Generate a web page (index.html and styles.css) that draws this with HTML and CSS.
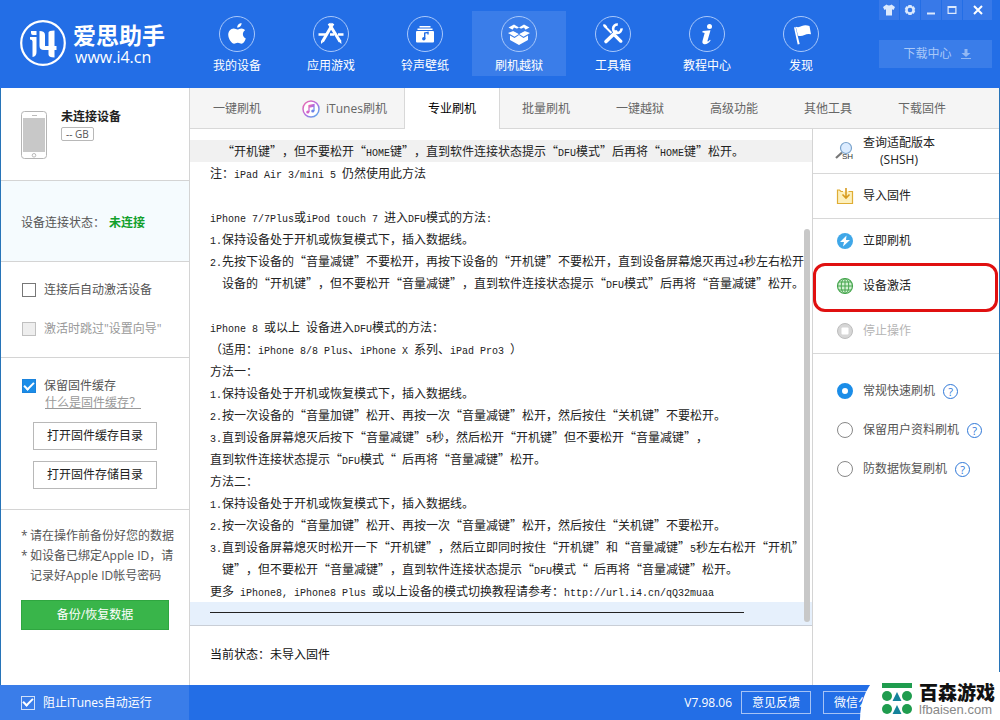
FILE: index.html
```html
<!DOCTYPE html>
<html lang="zh-CN">
<head>
<meta charset="utf-8">
<title>爱思助手</title>
<link rel="stylesheet" href="styles.css">
</head>
<body>
<div class="app">
  <header class="header">
    <div class="brand">
      <svg class="brand-logo" width="48" height="48" viewBox="0 0 48 48" aria-hidden="true">
        <circle cx="24" cy="24" r="21.8" fill="none" stroke="#fff" stroke-width="2.2"/>
        <path d="M12 12h5.500v4H14q-2 0-2-2zM11 18h6.500v15q0 4.500-4 5v-15.500q0-2-2.500-2zM20.500 12q5.500 0 5.500 4v11h3.500V13.500q0-2 6-2V27h2v4h-2v7.500q-6 0-6-3V31h-4.500q-4.500 0-4.500-4z" fill="#fff"/>
      </svg>
      <div class="brand-text">
        <strong class="brand-name">爱思助手</strong>
        <span class="brand-url">www.i4.cn</span>
      </div>
    </div>
    <nav class="nav">
      <a class="nav-item" href="#device">
        <svg class="nav-icon" viewBox="0 0 36 36"><circle class="ring" cx="18" cy="18" r="17.500"/><path d="M22.500 7c.3 2.500-1.700 4.700-4.200 4.700C18 9.400 20 7.200 22.500 7zM18.300 13.500c1.200 0 2.200-1.100 4.300-1.100 1.300 0 2.600.7 3.500 1.900-3.300 2-2.700 6.700.7 8.100-.9 2.600-2.600 5.300-4.300 5.300-1.400 0-1.900-.9-3.700-.9s-2.400.9-3.700.9c-2.300 0-5.500-4.600-5.800-8.200-.3-3.800 2.200-7 5.500-7 1.500 0 2.700 1 3.500 1z" fill="#fff"/></svg>
        <span>我的设备</span>
      </a>
      <a class="nav-item" href="#apps">
        <svg class="nav-icon" viewBox="0 0 36 36"><circle class="ring" cx="18" cy="18" r="17.500"/><path d="M16 7.500l11 18M20 7.500L9.500 25.500" stroke="#fff" stroke-width="3" fill="none"/><path d="M5.500 18.500h8M17 18.500h4M25 18.500h5.500" stroke="#fff" stroke-width="2.600"/><path d="M8 24.500l2.500 1.300L8 28zM25.500 25.500l2.600-1.400.4 3.900z" fill="#fff"/></svg>
        <span>应用游戏</span>
      </a>
      <a class="nav-item" href="#media">
        <svg class="nav-icon" viewBox="0 0 36 36"><circle class="ring" cx="18" cy="18" r="17.500"/><path d="M12.500 10.700h11M10.500 13.300h15" stroke="#fff" stroke-width="1.500"/><rect x="9" y="15" width="18" height="11.500" rx="1" fill="#fff"/><path d="M17.700 23v-6l3.300-.6v2" fill="none" stroke="#236ee6" stroke-width="1.400"/><circle cx="16.800" cy="22.800" r="1.700" fill="#236ee6"/></svg>
        <span>铃声壁纸</span>
      </a>
      <a class="nav-item nav-item-active" href="#flash">
        <svg class="nav-icon" viewBox="0 0 36 36"><circle class="ring" cx="18" cy="18" r="17.500"/><path d="M13 8.500l5 3-5 3-5.500-3zM23 8.500l5.500 3-5.500 3-5-3zM13 14.800l5 3.200-4.500 2.700-6.500-3.700zM23 14.800l6 2.200-6.500 3.700L18 18z" fill="#fff"/><path d="M13 11.500h0l5 2 5-2 2 3-7 3.500-7-3.500z" fill="#3a7de9"/><path d="M9 19.500l4.500 2.400L18 19l4.500 2.900 4.500-2.400V24l-9 5-9-5z" fill="#fff"/></svg>
        <span>刷机越狱</span>
      </a>
      <a class="nav-item" href="#tools">
        <svg class="nav-icon" viewBox="0 0 36 36"><circle class="ring" cx="18" cy="18" r="17.500"/><path d="M9.500 10l7 7" stroke="#fff" stroke-width="2" fill="none"/><path d="M8 8.500l2-.2 2.300 2.200-1.700 1.700-2.300-2zM18.500 20.300l2.300-2.300 6.500 6.500q.8 2.500-2.300 2.300z" fill="#fff"/><path d="M11 25.500l10-9.500" stroke="#fff" stroke-width="3.600" stroke-linecap="round"/><path d="M26.500 12.300a4.200 4.200 0 1 1-3.700-3.700" fill="none" stroke="#fff" stroke-width="2.600"/></svg>
        <span>工具箱</span>
      </a>
      <a class="nav-item" href="#tutorial">
        <svg class="nav-icon" viewBox="0 0 36 36"><circle class="ring" cx="18" cy="18" r="17.500"/><circle cx="20.500" cy="10.400" r="2.500" fill="#fff"/><path d="M13.500 15l8-.8-3 10.500q-.2 1 .6.700l2-1.600.5.700q-3.200 4.300-6.400 3.700-2.500-.4-1.600-3.700l2-7.300q.2-.8-2.100-.8z" fill="#fff"/></svg>
        <span>教程中心</span>
      </a>
      <a class="nav-item" href="#discover">
        <svg class="nav-icon" viewBox="0 0 36 36"><circle class="ring" cx="18" cy="18" r="17.500"/><path d="M11 11.500l1.500-.4L16.700 28l-2 .5zM12.800 10.800q3 1 6-.7 3.500-1.600 7.700 0L28 18.300q-3.500-1-6.500.8-3 1.500-6.500.7z" fill="#fff"/></svg>
        <span>发现</span>
      </a>
    </nav>
    <div class="header-side">
      <div class="window-controls">
        <button class="win-btn" aria-label="皮肤"><svg width="14" height="14" viewBox="0 0 14 14"><path d="M4.500 1.500q2.500 2 5 0L13 4l-1.500 3-1.500-.8v6.300H4V6.200L2.500 7 1 4z"/></svg></button>
        <button class="win-btn" aria-label="设置"><svg width="12" height="12" viewBox="0 0 12 12"><path fill-rule="evenodd" d="M4.500 1h3l.6 1.500 1.700-.3L11.300 5l-1 1 1 1-1.500 2.700-1.700-.3L7.500 11h-3l-.6-1.600-1.700.3L.7 7l1-1-1-1 1.500-2.800 1.700.3zM6 3.700a2.300 2.300 0 1 0 0 4.600 2.300 2.300 0 0 0 0-4.600z"/></svg></button>
        <button class="win-btn" aria-label="最小化"><svg width="12" height="12" viewBox="0 0 12 12"><path d="M2 8.500h8v2H2z"/></svg></button>
        <button class="win-btn" aria-label="最大化"><svg width="12" height="12" viewBox="0 0 12 12"><path fill-rule="evenodd" d="M1.500 2h9v8h-9zM2.700 4v4.800h6.600V4z"/></svg></button>
        <button class="win-btn win-btn-close" aria-label="关闭"><svg width="12" height="12" viewBox="0 0 12 12"><path d="M2 2l8 8M10 2l-8 8" stroke="#fff" stroke-width="2"/></svg></button>
      </div>
      <button class="download-center">下载中心
        <svg width="12" height="12" viewBox="0 0 12 12"><path d="M4.500 1h3v4h3L6 9 1.500 5h3zM1 10h10v1H1z" fill="#92b8f4"/></svg>
      </button>
    </div>
  </header>

  <div class="body">
    <aside class="sidebar">
      <section class="device">
        <svg width="26" height="48" viewBox="0 0 26 48" aria-hidden="true"><rect x=".5" y=".5" width="25" height="47" rx="3" fill="#fff" stroke="#b5b5b5"/><rect x="2" y="7" width="22" height="34" fill="#c8c8c8"/><path d="M11 4.500h5" stroke="#bbb"/><circle cx="13" cy="44.300" r="1.800" fill="none" stroke="#bbb"/></svg>
        <div class="device-info">
          <strong>未连接设备</strong>
          <span class="capacity">-- GB</span>
        </div>
      </section>
      <section class="connection">设备连接状态：<strong>未连接</strong></section>
      <section class="auto-options">
        <label class="check"><input type="checkbox"><span>连接后自动激活设备</span></label>
        <label class="check check-off"><input type="checkbox" disabled><span>激活时跳过"设置向导"</span></label>
      </section>
      <section class="cache">
        <label class="check"><input type="checkbox" checked><span>保留固件缓存</span></label>
        <a class="cache-help" href="#cache">什么是固件缓存？</a>
        <button class="outline-btn">打开固件缓存目录</button>
        <button class="outline-btn">打开固件存储目录</button>
      </section>
      <section class="backup">
        <ul class="notes">
          <li>请在操作前备份好您的数据</li>
          <li>如设备已绑定Apple ID，请记录好Apple ID帐号密码</li>
        </ul>
        <button class="backup-btn">备份/恢复数据</button>
      </section>
    </aside>

    <div class="content">
      <nav class="tabs">
        <button class="tab">一键刷机</button>
        <button class="tab tab-wide"><svg width="18" height="18" viewBox="0 0 18 18"><defs><linearGradient id="it" x1="0" y1="0" x2="1" y2="1"><stop offset="0" stop-color="#f06aa8"/><stop offset=".5" stop-color="#b56be0"/><stop offset="1" stop-color="#45b4ee"/></linearGradient></defs><circle cx="9" cy="9" r="8" fill="#fff" stroke="url(#it)" stroke-width="1.500"/><path d="M7 12V5.500l5-1v6.500M7 7l5-1" fill="none" stroke="url(#it)" stroke-width="1.300"/><circle cx="5.800" cy="12" r="1.600" fill="#d564c5"/><circle cx="10.800" cy="11" r="1.600" fill="#6f82e8"/></svg>iTunes刷机</button>
        <button class="tab tab-active">专业刷机</button>
        <button class="tab">批量刷机</button>
        <button class="tab">一键越狱</button>
        <button class="tab">高级功能</button>
        <button class="tab">其他工具</button>
        <button class="tab">下载固件</button>
      </nav>
      <div class="workspace">
        <main class="main">
          <div class="log">
            <p class="log-gray"><span class="en">  </span>“开机键”，但不要松开“<span class="en">HOME</span>键”，直到软件连接状态提示“<span class="en">DFU</span>模式”后再将“<span class="en">HOME</span>键”松开。</p>
            <p>注：<span class="en">iPad Air 3/mini 5 </span>仍然使用此方法</p>
            <p></p>
            <p><span class="en">iPhone 7/7Plus</span>或<span class="en">iPod touch 7 </span>进入<span class="en">DFU</span>模式的方法<span class="en">:</span></p>
            <p><span class="en">1.</span>保持设备处于开机或恢复模式下，插入数据线。</p>
            <p><span class="en">2.</span>先按下设备的“音量减键”不要松开，再按下设备的“开机键”不要松开，直到设备屏幕熄灭再过<span class="en">4</span>秒左右松开</p>
            <p><span class="en">  </span>设备的“开机键”，但不要松开“音量减键”，直到软件连接状态提示“<span class="en">DFU</span>模式”后再将“音量减键”松开。</p>
            <p></p>
            <p><span class="en">iPhone 8 </span>或以上<span class="en"> </span>设备进入<span class="en">DFU</span>模式的方法：</p>
            <p>（适用：<span class="en">iPhone 8/8 Plus</span>、<span class="en">iPhone X </span>系列、<span class="en">iPad Pro3 </span>）</p>
            <p>方法一：</p>
            <p><span class="en">1.</span>保持设备处于开机或恢复模式下，插入数据线。</p>
            <p><span class="en">2.</span>按一次设备的“音量加键”松开、再按一次“音量减键”松开，然后按住“关机键”不要松开。</p>
            <p><span class="en">3.</span>直到设备屏幕熄灭后按下“音量减键”<span class="en">5</span>秒，然后松开“开机键”但不要松开“音量减键”，</p>
            <p>直到软件连接状态提示“<span class="en">DFU</span>模式“<span class="en"> </span>后再将“音量减键”松开。</p>
            <p>方法二：</p>
            <p><span class="en">1.</span>保持设备处于开机或恢复模式下，插入数据线。</p>
            <p><span class="en">2.</span>按一次设备的“音量加键”松开、再按一次“音量减键”松开，然后按住“关机键”不要松开。</p>
            <p><span class="en">3.</span>直到设备屏幕熄灭时松开一下“开机键”，然后立即同时按住“开机键”和“音量减键”<span class="en">5</span>秒左右松开“开机”</p>
            <p><span class="en">  </span>键”，但不要松开“音量减键”，直到软件连接状态提示“<span class="en">DFU</span>模式“<span class="en"> </span>后再将“音量减键”松开。</p>
            <p>更多<span class="en"> iPhone8, iPhone8 Plus </span>或以上设备的模式切换教程请参考：<span class="en">http://url.i4.cn/qQ32muaa</span></p>
            <div class="log-end"><hr></div>
            <div class="scroll-thumb"></div>
          </div>
          <div class="status">当前状态：未导入固件</div>
        </main>
        <aside class="actions">
          <button class="action action-shsh">
            <svg width="20" height="20" viewBox="0 0 20 20"><path d="M1 17l6-5.500" stroke="#777" stroke-width="2.200"/><circle cx="11" cy="7" r="5.500" fill="#dcecff" stroke="#7aa3cc" stroke-width="1.200"/><text x="7" y="18" font-size="8">SH</text></svg>
            <span>查询适配版本<br>(SHSH)</span>
          </button>
          <button class="action">
            <svg width="20" height="20" viewBox="0 0 20 20"><path d="M8 5.500H6L4.500 4H2.500v13.500h15v-12h-4" fill="#fdf0bd" stroke="#dfad34" stroke-width="1.200"/><path d="M11 2v9M7.500 8.500L11 12l3.500-3.500" fill="none" stroke="#d79b1e" stroke-width="1.600"/></svg>
            <span>导入固件</span>
          </button>
          <button class="action action-plain">
            <svg width="20" height="20" viewBox="0 0 20 20"><circle cx="10" cy="10" r="8" fill="#3fa7e8"/><path d="M11.500 4.500L5 11h4l-1 4.500L15 9h-4z" fill="#fff"/></svg>
            <span>立即刷机</span>
          </button>
          <button class="action action-plain action-marked">
            <svg width="20" height="20" viewBox="0 0 20 20"><g fill="none" stroke="#45a54d"><circle cx="10" cy="10" r="7.500" fill="#d3f0d3" stroke-width="1.200"/><ellipse cx="10" cy="10" rx="3.800" ry="7.500"/><path d="M10 2.500v15M2.500 10h15M4 6h12M4 14h12"/></g></svg>
            <span>设备激活</span>
          </button>
          <button class="action action-off" disabled>
            <svg width="20" height="20" viewBox="0 0 20 20"><circle cx="10" cy="10" r="7.500" fill="#d6d6d6" stroke="#bdbdbd"/><rect x="6.500" y="6.500" width="7" height="7" rx="1" fill="#fff"/></svg>
            <span>停止操作</span>
          </button>
          <div class="modes">
            <div class="mode"><label><input type="radio" name="mode" checked><span>常规快速刷机</span></label><a class="help" href="#h1">?</a></div>
            <div class="mode"><label><input type="radio" name="mode"><span>保留用户资料刷机</span></label><a class="help" href="#h2">?</a></div>
            <div class="mode"><label><input type="radio" name="mode"><span>防数据恢复刷机</span></label><a class="help" href="#h3">?</a></div>
          </div>
        </aside>
      </div>
    </div>
  </div>

  <footer class="footer">
    <div class="footer-left"><label class="check check-light"><input type="checkbox" checked><span>阻止iTunes自动运行</span></label></div>
    <div class="footer-right">
      <span class="version">V7.98.06</span>
      <button class="foot-btn">意见反馈</button>
      <button class="foot-btn foot-btn-wechat">微信公众号</button>
    </div>
  </footer>

  <div class="site-badge">
    <svg class="badge-shape" viewBox="0 0 140 48" preserveAspectRatio="none"><path d="M140 0H22Q0 18 0 48h140z" fill="#fff"/></svg>
    <svg class="badge-logo" width="30" height="32" viewBox="0 0 30 32"><path d="M0 0h30v5H0z" fill="#1f9c4e"/><g fill="#1f9c4e"><circle cx="5" cy="13" r="5"/><circle cx="25" cy="13" r="5"/><circle cx="5" cy="26" r="5"/><circle cx="25" cy="26" r="5"/></g><path d="M15 9l4.500 9h-9zM15 22l4.500 9h-9z" fill="#14829a"/></svg>
    <div class="badge-text"><strong>百森游戏</strong><span>lfbaisen.com</span></div>
  </div>
</div>
</body>
</html>
```

FILE: styles.css
```css
* { box-sizing: border-box; }

body {
  margin: 0;
  font: 12px/20px "Open Sans", "Noto Sans CJK SC", sans-serif;
  color: #555;
}

button, input { font: inherit; color: inherit; }
button { margin: 0; padding: 0; border: 0; background: none; }
a { color: inherit; text-decoration: none; }

.app {
  position: relative;
  display: flex;
  flex-direction: column;
  min-height: 100vh;
  background: #fff;
}

/* Header */
.header { display: flex; height: 88px; background: #236ee6; color: #fff; }
.brand { display: flex; flex: none; width: 190px; padding: 19px 0 0 19px; gap: 6px; }
.brand-text { display: flex; flex-direction: column; padding-top: 4px; }
.brand-name { font-size: 23px; line-height: 24px; font-weight: 700; }
.brand-url { padding-left: 2px; font: 16px/20px "Open Sans", sans-serif; }

.nav { display: flex; padding-top: 11px; }
.nav-item {
  display: flex;
  flex-direction: column;
  align-items: center;
  gap: 4px;
  width: 94px;
  height: 65px;
  padding-top: 5px;
}
.nav-item-active { background: #3a7de9; }
.nav-icon { width: 36px; height: 36px; }
.ring { fill: none; stroke: #a9c8fa; stroke-width: 1; }

.header-side { display: flex; flex-direction: column; gap: 20px; width: 113px; margin: 0 8px 0 auto; }
.window-controls { display: flex; gap: 1px; }
.win-btn {
  display: flex;
  flex: 20;
  align-items: center;
  justify-content: center;
  height: 20px;
  background: #3879e8;
}
.win-btn svg { fill: #dce9fd; }
.win-btn-close { flex: 29; }
.download-center {
  display: flex;
  align-items: center;
  justify-content: center;
  gap: 8px;
  height: 28px;
  padding-left: 4px;
  background: #3a7de9;
  color: #a9c8f8;
}

/* Body */
.body { display: flex; flex: 1; border: solid #2774b8; border-width: 0 1px; }
.sidebar { flex: none; width: 189px; border-right: 1px solid #d4d4d4; }
.sidebar section { border-bottom: 1px solid #d4d4d4; }
.sidebar .backup { border-bottom: 0; }

.device { display: flex; gap: 14px; height: 93px; padding: 23px 0 0 20px; }
.device-info { display: flex; flex-direction: column; align-items: flex-start; color: #222; gap: 4px; }
.device-info strong { line-height: 12px; }
.capacity {
  padding: 0 4px;
  border: 1px solid #b8b8b8;
  border-radius: 2px;
  font-size: 10px;
  line-height: 12px;
  color: #555;
}
.connection { display: flex; align-items: center; height: 81px; padding: 4px 0 0 20px; background: #f5fbfe; }
.connection strong { padding-left: 4px; color: #12a02c; }

.auto-options { display: flex; flex-direction: column; gap: 19px; height: 96px; padding: 18px 0 0 21px; }
.check { display: flex; align-items: center; gap: 8px; }
.check-off { color: #999; }
.check input {
  display: grid;
  place-items: center;
  appearance: none;
  flex: none;
  width: 14px;
  height: 14px;
  margin: 0;
  border: 1px solid #777;
  background: #fff;
}
.check input:disabled { border-color: #c0c0c0; background: #eee; }
.check input:checked { border-color: #1b83dc; background: #1b8de8; }
.check input:checked::before {
  content: "";
  width: 8px;
  height: 4px;
  margin-bottom: 3px;
  border: solid #fff;
  border-width: 0 0 2px 2px;
  transform: rotate(-45deg);
}
.check-light { color: #fff; }
.check-light input:checked { border-color: #cfe0fa; background: transparent; }

.cache { display: flex; flex-direction: column; align-items: flex-start; height: 152px; padding: 18px 0 0 21px; }
.cache-help { margin-left: 23px; line-height: 14px; color: #999; text-decoration: underline; }
.outline-btn { width: 124px; height: 28px; margin: 11px 0 0 11px; border: 1px solid #b8b8b8; color: #222; }
.cache-help + .outline-btn { margin-top: 12px; }

.backup { padding: 16px 0 0 20px; }
.notes { margin: 0; padding: 0 8px 0 9px; list-style: none; }
.notes li::before { content: "*"; display: inline-block; width: 9px; margin-left: -9px; }
.backup-btn { display: block; width: 148px; height: 30px; margin-top: 14px; border: 1px solid #2fa640; background: #39b54a; color: #fff; }

.content { display: flex; flex: 1; flex-direction: column; min-width: 0; }
.tabs { display: flex; height: 41px; background: #f5f5f5; border-bottom: 1px solid #d8d8d8; }
.tab { display: flex; align-items: center; justify-content: center; gap: 6px; width: 94px; height: 41px; color: #666; }
.tab-wide { width: 121px; }
.tab-active { width: 96px; border: solid #d8d8d8; border-width: 0 1px; margin: 0 -1px; background: #fff; color: #000; }

.workspace { display: flex; flex: 1; }
.main { display: flex; flex: 1; flex-direction: column; min-width: 0; }
.log {
  position: relative;
  padding-top: 11px;
  overflow: hidden;
  border-bottom: 1px solid #c9ced6;
  font-family: "Noto Sans CJK SC", sans-serif;
  line-height: 22px;
  text-spacing-trim: space-all;
  color: #222;
}
.log p { height: 22px; margin: 0; padding-left: 20px; white-space: pre; }
.log .log-gray { background: #f1f1f1; }
.en { font: 10px/22px "Liberation Mono", monospace; }
.log-end { height: 23px; padding: 10px 68px 0 20px; background: #e6f0fc; }
.log-end hr { margin: 0; border: 0; border-top: 1px solid #222; }
.scroll-thumb { position: absolute; right: 2px; top: 100px; bottom: 3px; width: 6px; border-radius: 3px; background: #c8c8c8; }
.status { padding: 19px 20px; color: #111; }

.actions { flex: none; width: 187px; border-left: 1px solid #d4d4d4; }
.action {
  display: flex;
  align-items: center;
  gap: 8px;
  width: 100%;
  height: 45px;
  padding-left: 22px;
  border-bottom: 1px solid #d8d8d8;
  color: #222;
}
.action svg { flex: none; }
.action text { font-family: "Liberation Sans", sans-serif; fill: #333; }
.action-shsh { line-height: 17px; }
.action-plain { border-bottom-color: transparent; }
.action-off { color: #b5b5b5; }
.action-marked { position: relative; }
.action-marked::after {
  content: "";
  position: absolute;
  inset: -1px 1px -4px 0;
  border: 3px solid #e01010;
  border-radius: 12px;
}
.modes { display: flex; flex-direction: column; gap: 19px; padding: 27px 0 0 24px; }
.mode, .mode label { display: flex; align-items: center; gap: 8px; }
.mode label { gap: 10px; }
.mode input {
  appearance: none;
  width: 16px;
  height: 16px;
  margin: 0;
  border: 1px solid #888;
  border-radius: 50%;
  background: #fff;
}
.mode input:checked { border: 5px solid #1b8de8; }
.help {
  width: 15px;
  height: 15px;
  border: 1px solid #2f78d8;
  border-radius: 50%;
  font-size: 11px;
  line-height: 13px;
  text-align: center;
  color: #2f78d8;
}

/* Footer */
.footer { display: flex; height: 35px; background: #236ee6; color: #fff; }
.footer-left { display: flex; align-items: center; width: 189px; padding-left: 21px; background: #3a7de9; }
.footer-right { display: flex; align-items: center; gap: 12px; margin-left: auto; padding-right: 95px; }
.version { margin-right: -3px; }
.foot-btn { width: 70px; height: 23px; border: 1px solid #a5c3f5; }
.foot-btn-wechat { width: 82px; }

.site-badge { position: absolute; right: 0; bottom: 0; display: flex; gap: 7px; width: 140px; height: 48px; padding: 11px 0 0 22px; }
.badge-shape { position: absolute; inset: 0; width: 100%; height: 100%; }
.badge-logo, .badge-text { position: relative; }
.badge-text { display: flex; flex-direction: column; }
.badge-text strong { font-size: 19px; line-height: 20px; font-weight: 900; color: #111; }
.badge-text span { font: 13px/14px "Liberation Sans", sans-serif; color: #888; }
```
